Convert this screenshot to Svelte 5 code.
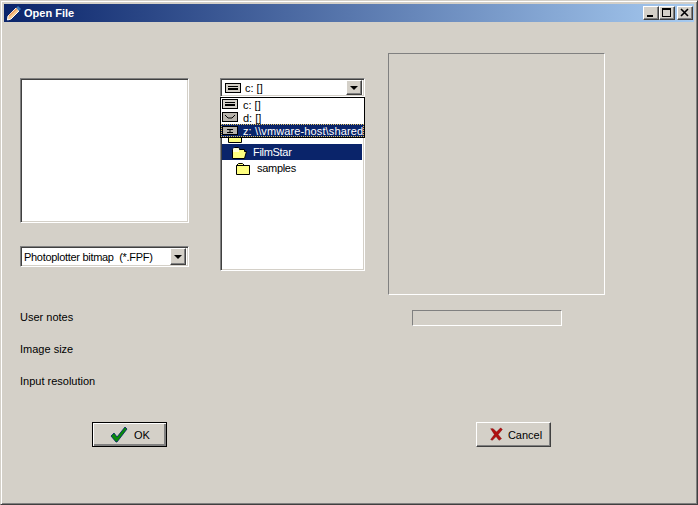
<script>
  const labels = ['User notes', 'Image size', 'Input resolution'];
</script>

<div class="window">
  <header class="title">
    <svg class="app-icon" width="16" height="16" viewBox="0 0 16 16">
      <path d="M2 11 L10 3 L13 6 L5 14 L1.5 15 Z" fill="#f6c890" stroke="#fff" stroke-width="1"/>
      <path d="M10 3 L12 1 L15 4 L13 6 Z" fill="#3a78b8"/>
      <path d="M3 11 L11 3.5" stroke="#e8985a" stroke-width="1.4"/>
    </svg>
    <span class="title-text">Open File</span>
    <div class="caption-btns">
      <button class="cap"><svg width="14" height="12" viewBox="0 0 14 12"><rect x="3" y="8" width="6" height="2" fill="#000"/></svg></button>
      <button class="cap"><svg width="14" height="12" viewBox="0 0 14 12"><path d="M2 1h9v9H2z M3 3v6h7V3z" fill="#000" fill-rule="evenodd"/></svg></button>
      <button class="cap close"><svg width="14" height="12" viewBox="0 0 14 12"><path d="M3 2 L10 9 M10 2 L3 9" stroke="#000" stroke-width="1.6"/></svg></button>
    </div>
  </header>

  <main class="body">
    <div class="top">
      <section class="col-left">
        <div class="file-list sunken"></div>
        <div class="combo sunken">
          <span class="combo-text narrow">Photoplotter bitmap&nbsp; (*.FPF)</span>
          <span class="arrow"><i></i></span>
        </div>
      </section>

      <section class="col-mid">
        <div class="combo sunken drive-combo">
          <svg class="drive" width="16" height="12" viewBox="0 0 16 12"><path d="M0 1h16v10H0z" fill="#000"/><path d="M1 2h14v8H1z" fill="#d4d0c8"/><path d="M3 4h10v1H3zM3 6h10v2H3z" fill="#000"/></svg>
          <span class="combo-text">c: []</span>
          <span class="arrow"><i></i></span>
        </div>
        <div class="dir-list sunken">
          <div class="dir-row root">
            <svg class="folder" width="17" height="13" viewBox="0 0 17 13"><path d="M1.500 3.500 L3.500 1.500 H7.500 L8.500 3.500 H14.500 V12.500 H1.500Z" fill="#ffff80" stroke="#000"/></svg>
          </div>
          <div class="dir-row selected">
            <svg class="folder" width="17" height="13" viewBox="0 0 17 13"><path d="M1.500 3.500 L3.500 1.500 H7.500 L8.500 3.500 H13.500 V5.500 H15.500 L13.500 12.500 H1.500Z" fill="#ffff80" stroke="#000"/><path d="M2 2h6v4H2z" fill="#fff" opacity=".7"/></svg>
            <span>FilmStar</span>
          </div>
          <div class="dir-row sub">
            <svg class="folder" width="16" height="13" viewBox="0 0 16 13"><path d="M1.500 3.500 L3.500 1.500 H7.500 L9.500 3.500 H14.500 V12.500 H1.500Z" fill="#ffff80" stroke="#000"/><path d="M1.500 3.500h13" stroke="#000"/></svg>
            <span>samples</span>
          </div>
        </div>
        <div class="drop">
          <div class="drop-row">
            <svg width="16" height="11" viewBox="0 0 16 11"><path d="M0 0h16v10H0z" fill="#000"/><path d="M1 1h14v8H1z" fill="#d4d0c8"/><path d="M3 3h10v1H3zM3 5h10v2H3z" fill="#000"/></svg>
            <span>c: []</span>
          </div>
          <div class="drop-row">
            <svg width="16" height="11" viewBox="0 0 16 11"><path d="M0 0h16v10H0z" fill="#000"/><path d="M1 1h14v8H1z" fill="#b8b4ac"/><path d="M3 3 L6 6H10L13 3" fill="none" stroke="#000"/></svg>
            <span>d: []</span>
          </div>
          <div class="drop-row active">
            <svg width="16" height="11" viewBox="0 0 16 11"><path d="M0 1h16v9H0z" fill="#000"/><path d="M1 2h14v7H1z" fill="#b8b4ac"/><path d="M5 4h6v1H8.500v2H11v1H5V7h2.500V5H5z" fill="#000"/></svg>
            <span class="wide">z: \\vmware-host\shared</span>
          </div>
        </div>
      </section>

      <section class="col-right">
        <div class="preview etched"></div>
        <div class="progress etched"></div>
      </section>
    </div>

    <ul class="labels">
      {#each labels as l}<li>{l}</li>{/each}
    </ul>

    <div class="buttons">
      <button class="btn default">
        <svg width="20" height="18" viewBox="0 0 20 18"><path d="M2 10 L5 7 L8 11 L16 1 L18 3 L8 16 H7Z" fill="#0a8a0a" stroke="#00206a" stroke-width=".8"/></svg>
        <span>OK</span>
      </button>
      <button class="btn cancel">
        <svg width="15" height="15" viewBox="0 0 18 16"><path d="M2 1 L5 1 L9 5 L14 0 L16 2 L11 8 L15 13 L12 15 L8.500 10.500 L4 15 L2 14 L6.500 8 Z" fill="#b01010" stroke="#700" stroke-width=".5"/></svg>
        <span>Cancel</span>
      </button>
    </div>
  </main>
</div>

<style>
  :global(body) { margin: 0; background: #d4d0c8; }
  .window {
    width: 698px; height: 505px; box-sizing: border-box;
    background: #d4d0c8;
    border: 1px solid; border-color: #d4d0c8 #404040 #404040 #d4d0c8;
    box-shadow: inset 1px 1px 0 #fff, inset -1px -1px 0 #808080;
    padding: 3px;
    font: 11px "Liberation Sans", Arial, sans-serif;
    color: #000;
    overflow: hidden;
    display: flex; flex-direction: column;
  }
  .title {
    height: 18px; flex: none; display: flex; align-items: center;
    background: linear-gradient(90deg, #0a246a, #a6caf0);
    padding: 0 1px 0 2px;
    color: #fff;
  }
  .app-icon { flex: none; }
  .title-text { font: bold 11px "Liberation Sans", sans-serif; margin: -1px 0 0 2px; }
  .caption-btns { margin-left: auto; display: flex; }
  .cap {
    width: 16px; height: 14px; padding: 0; display: flex; align-items: center; justify-content: center;
    background: #d4d0c8; border: 1px solid; border-color: #fff #404040 #404040 #fff;
    box-shadow: inset -1px -1px 0 #808080;
  }
  .close { margin-left: 2px; }

  .body { flex: 1; display: flex; flex-direction: column; min-height: 0; padding-left: 16px; }
  .top { display: flex; padding-top: 32px; height: 273px; box-sizing: content-box; }
  .sunken {
    box-sizing: border-box; background: #fff;
    border: 1px solid; border-color: #808080 #fff #fff #808080;
    box-shadow: inset 1px 1px 0 #404040, inset -1px -1px 0 #d4d0c8;
  }
  .etched {
    box-sizing: border-box;
    border: 1px solid; border-color: #808080 #fff #fff #808080;
  }
  .col-left { width: 169px; padding-top: 24px; }
  .file-list { height: 145px; }
  .combo {
    height: 21px; display: flex; align-items: center; padding: 2px 2px 2px 3px;
  }
  .col-left .combo { margin-top: 23px; }
  .combo-text { flex: 1; white-space: nowrap; }
  .narrow { letter-spacing: -0.3px; }
  .wide { letter-spacing: 0.12px; }
  .arrow {
    width: 16px; height: 17px; box-sizing: border-box; flex: none;
    background: #d4d0c8; border: 1px solid; border-color: #fff #404040 #404040 #fff;
    box-shadow: inset -1px -1px 0 #808080;
    display: flex; align-items: center; justify-content: center;
  }
  .arrow i { width: 0; height: 0; border: 4px solid transparent; border-top-color: #000; border-bottom: 0; }

  .col-mid { width: 145px; margin-left: 31px; padding-top: 24px; position: relative; }
  .drive-combo { height: 19px; gap: 4px; padding: 2px 2px 2px 4px; }
  .drive-combo .arrow { height: 15px; }
  .drive { flex: none; }
  .dir-list { height: 174px; padding-top: 30px; }
  .dir-row { display: flex; align-items: center; height: 16px; margin: 0 2px 0 1px; gap: 5px; padding-left: 9px; letter-spacing: -0.3px; }
  .dir-row span { padding-bottom: 1px; }
  .dir-row.root { padding-left: 5px; }
  .dir-row.selected { background: #0a246a; color: #fff; }
  .dir-row.sub { padding-left: 13px; gap: 6px; }
  .drop {
    position: absolute; left: 0; top: 43px; width: 145px; box-sizing: border-box;
    background: #fff; border: 1px solid #000;
  }
  .drop-row { height: 13px; display: flex; align-items: center; gap: 5px; padding-left: 1px; white-space: nowrap; }
  .drop-row.active {
    background: #0a246a; color: #fff;
    outline: 1px dotted #e0c060; outline-offset: -1px;
  }

  .col-right { margin-left: 23px; display: flex; flex-direction: column; align-items: flex-start; margin-top: -1px; }
  .preview { width: 217px; height: 242px; }
  .progress { width: 150px; height: 16px; margin: 15px 0 0 24px; }

  .labels { list-style: none; margin: -26px 0 0; padding: 0; }
  .labels li { height: 32px; line-height: 32px; }

  .buttons { display: flex; margin-top: 25px; padding-left: 72px; align-items: center; }
  .btn {
    width: 75px; height: 25px; padding: 0; display: flex; align-items: center; justify-content: center; gap: 5px;
    background: #d4d0c8; font: 11px "Liberation Sans", sans-serif; color: #000;
    border: 1px solid; border-color: #fff #404040 #404040 #fff;
    box-shadow: inset -1px -1px 0 #808080;
    box-sizing: border-box;
  }
  .btn.default { border-color: #000; box-shadow: inset 1px 1px 0 #fff, inset -1px -1px 0 #808080, inset -2px -2px 0 #808080; }
  .btn.cancel { margin-left: 309px; padding-left: 4px; gap: 4px; }
</style>
